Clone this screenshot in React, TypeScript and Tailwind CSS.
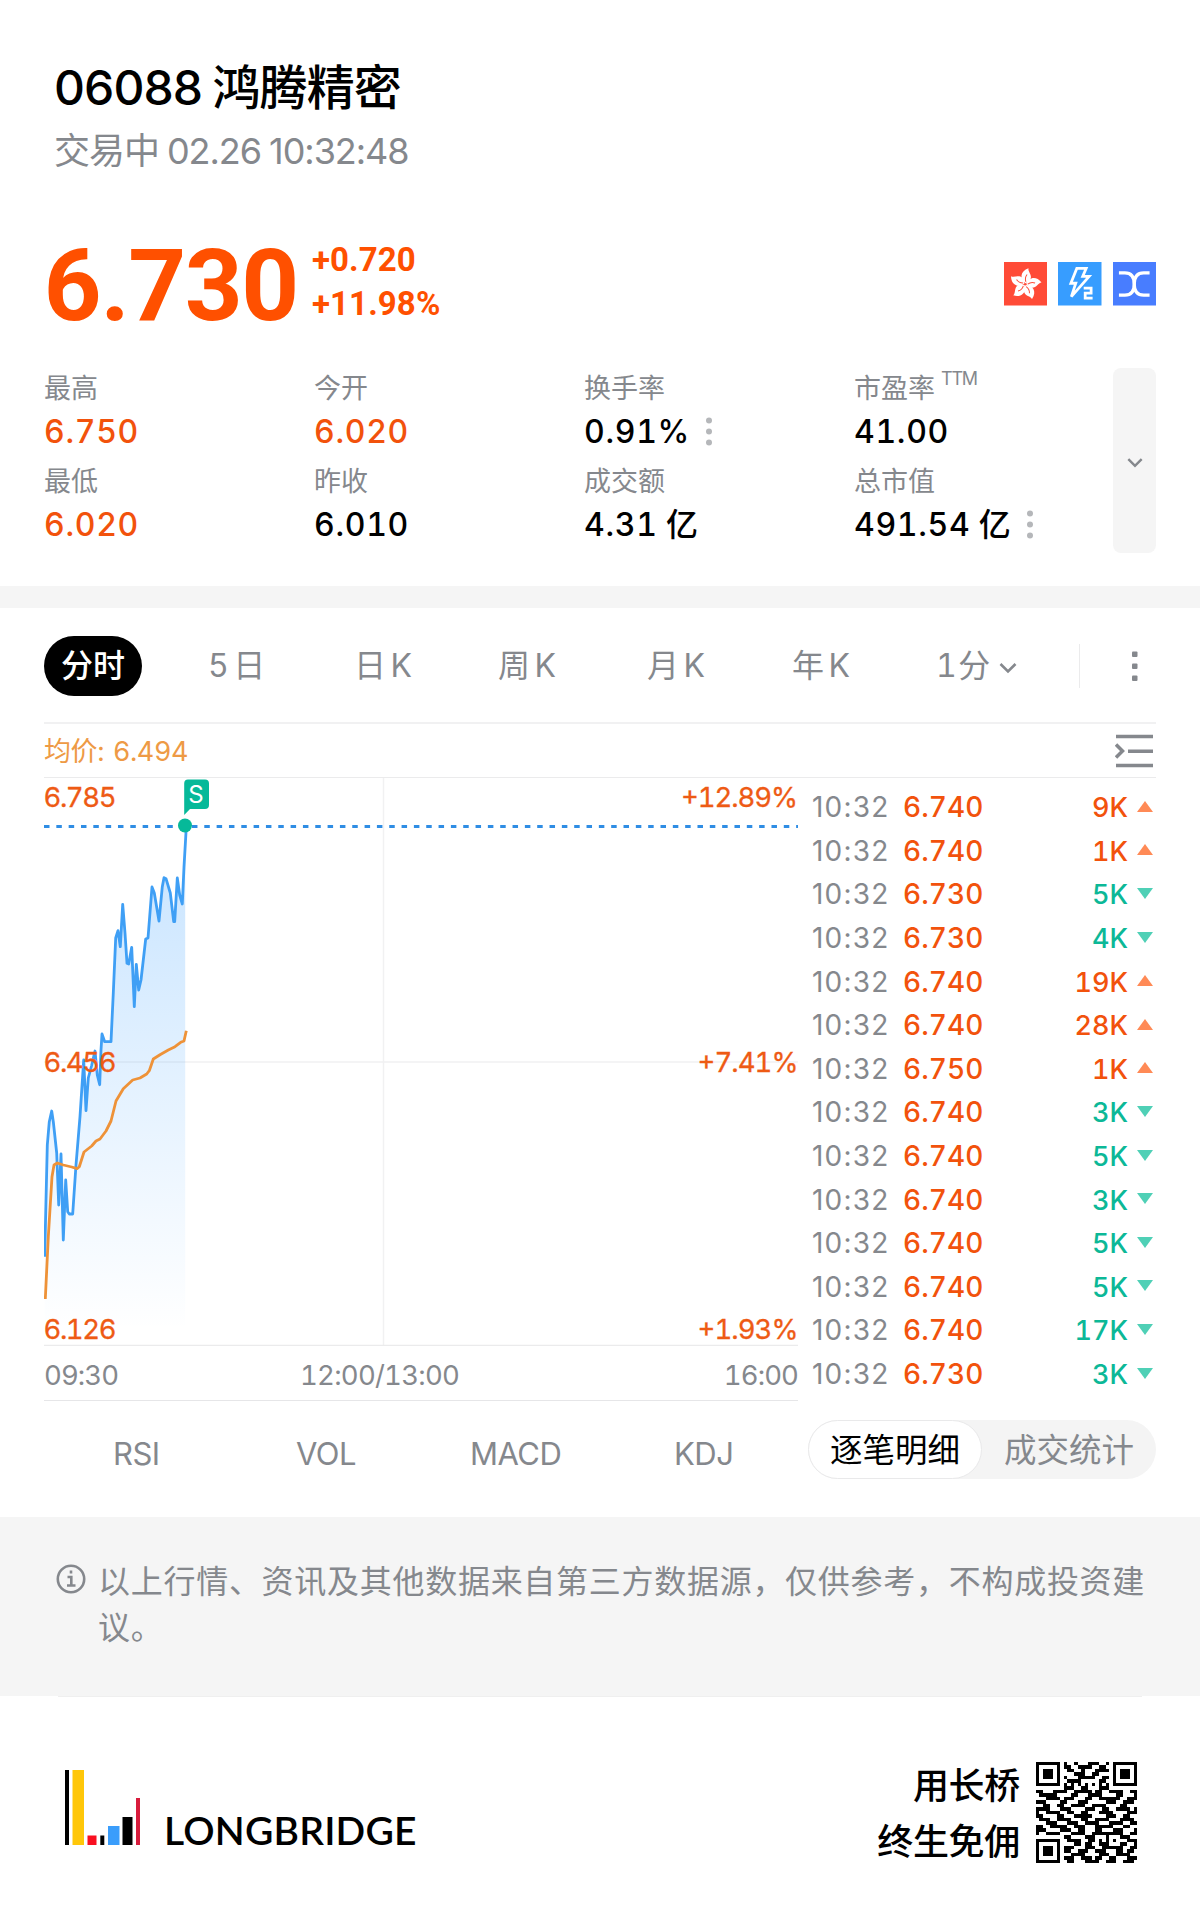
import React from 'react';

const stats = [
  [
    { label: '最高', value: '6.750', color: 'text-[#f2520c]' },
    { label: '最低', value: '6.020', color: 'text-[#f2520c]' },
  ],
  [
    { label: '今开', value: '6.020', color: 'text-[#f2520c]' },
    { label: '昨收', value: '6.010', color: 'text-black' },
  ],
  [
    { label: '换手率', value: '0.91%', color: 'text-black', more: true },
    { label: '成交额', value: '4.31 亿', color: 'text-black' },
  ],
  [
    { label: '市盈率', sup: 'TTM', value: '41.00', color: 'text-black' },
    { label: '总市值', value: '491.54 亿', color: 'text-black', more: true },
  ],
];

const trades = [
  { price: '6.740', qty: '9K', up: true },
  { price: '6.740', qty: '1K', up: true },
  { price: '6.730', qty: '5K', up: false },
  { price: '6.730', qty: '4K', up: false },
  { price: '6.740', qty: '19K', up: true },
  { price: '6.740', qty: '28K', up: true },
  { price: '6.750', qty: '1K', up: true },
  { price: '6.740', qty: '3K', up: false },
  { price: '6.740', qty: '5K', up: false },
  { price: '6.740', qty: '3K', up: false },
  { price: '6.740', qty: '5K', up: false },
  { price: '6.740', qty: '5K', up: false },
  { price: '6.740', qty: '17K', up: false },
  { price: '6.730', qty: '3K', up: false },
];

const pricePoints =
  '44.7,1256.7 47.3,1145 49.3,1121.7 51.7,1111 53.3,1121.7 56.7,1153 58.7,1205 61,1154 63.3,1240 65.7,1180 67.7,1211.7 69.3,1214 72.7,1214 76,1165 80,1116.7 83.7,1060 86,1110.7 88.3,1078 91.5,1066 95,1051 97.3,1075 99.7,1084.7 101,1050 102,1034 104.7,1041.7 111,1041.7 113.3,993 115.7,938 118,930.7 120.3,946.7 122.7,904.3 125,933 127,963.3 128.7,964 131.7,947.3 134.3,1006.7 136.3,964.3 138.7,990 141,980 143.3,960 145.7,939 148,938 152,887 154.3,893 159,921 162.3,886.7 164,877.7 166,878.7 170.3,893 173.7,921.7 174.7,921.7 177.3,878 179.7,895 182.3,904 184,867 186.3,827';

const averagePoints =
  '45.3,1299 48.3,1236.7 52,1176.7 54,1165 57.3,1163 63.3,1165 71.7,1167 77,1168.7 79.3,1166.7 84,1152 91.7,1146 96,1141 100,1139 106,1131 111,1121 116,1101 123.3,1088.7 132.7,1080 140,1078 146.7,1074 149.3,1070.7 153.3,1059 160,1054.7 168.3,1050 175,1046.7 180.7,1042.3 184,1041 186.3,1030.7';

// One string per row of modules
const qrRows = [
  '11111110100100011100101111111',
  '10000010110011110011001000001',
  '10111010011001000111101011101',
  '10111010000111001100001011101',
  '10111010100011111001101011101',
  '10000010011110000011001000001',
  '11111110101010101010101111111',
  '00000000111001100011100000000',
  '11000111100111110110011110011',
  '01111100001100011110000110001',
  '00011110111000110011111100111',
  '11100001100011100000111001110',
  '00110011001111001111000011000',
  '11110001110000111001100111101',
  '10011110011001100011110000111',
  '11000011000111110000111001100',
  '01110011110001100111100011110',
  '00011100011100111100011110011',
  '11001111100111000111110001100',
  '11100001110011000110001110001',
  '10011110001111001111111110011',
  '00000000110000111000100011100',
  '11111110011110011010101000111',
  '10000010000110110011100011001',
  '10111010111000111001111110011',
  '10111010110011100111000110110',
  '10111010001111000011100111100',
  '10000010111001110110011000111',
  '11111110011000111100111001110',
];

const Dots = () => (
  <svg className="ml-[16px] h-[34px] w-[6px]" viewBox="0 0 6 34" fill="#b5b7ba">
    <circle cx="3" cy="5.5" r="3" />
    <circle cx="3" cy="16.5" r="3" />
    <circle cx="3" cy="27.5" r="3" />
  </svg>
);

const Badges = () => (
  <div className="flex gap-[11px]">
    <svg className="size-[43.5px]" viewBox="0 0 44 44">
      <rect width="44" height="44" fill="#ff4b37" />
      {[8, 80, 152, 224, 296].map((angle) => (
        <g key={angle} transform={`rotate(${angle} 21.5 22.5)`}>
          <path d="M21.5 21.5C15 18 14.500 10 22.500 6C22 9.500 27.500 12 26 17C25.200 19.500 23 20.500 21.500 21.500Z" fill="#fff" />
          <path d="M21.800 20C20.500 17.500 20.500 15 22 12.500" fill="none" stroke="#ff4b37" strokeWidth="1" />
        </g>
      ))}
    </svg>
    <svg className="size-[43.5px]" viewBox="0 0 44 44" fill="none" stroke="#fff">
      <rect width="44" height="44" fill="#379dff" stroke="none" />
      <path d="M19 6.5H28.5L25 14.5H31.5L13.5 35L18 21.5H13L19 6.5Z" strokeWidth="2.8" />
      <path d="M26 26.5H33.5V31.5H27.5V36.5H35" strokeWidth="2.8" />
    </svg>
    <svg className="size-[43.5px]" viewBox="0 0 44 44" fill="none" stroke="#fff" strokeWidth="3.2">
      <rect width="44" height="44" fill="#487dff" stroke="none" />
      <path d="M6 11H12C18 11 21.5 15 21.5 22.5S18 33.5 12 33.5H6" />
      <path d="M37 11H31C25 11 21.5 15 21.5 22.5S25 33.5 31 33.5H37" />
    </svg>
  </div>
);

const Chart = () => (
  <svg className="block h-[568px] w-[754px]" viewBox="44 778 754 568">
    <defs>
      <linearGradient id="area" gradientUnits="userSpaceOnUse" x1="0" y1="827" x2="0" y2="1330">
        <stop offset="0" stopColor="#379dff" stopOpacity="0.28" />
        <stop offset="1" stopColor="#379dff" stopOpacity="0" />
      </linearGradient>
    </defs>
    <path d="M383.5 778V1346M44 1062H798" stroke="#f1f1f2" strokeWidth="1.5" />
    <path d="M44 1345.5H798" stroke="#ebebec" strokeWidth="1.5" />
    <polygon points={`44.7,1330 ${pricePoints} 185.2,827 185.2,1330`} fill="url(#area)" />
    <path d="M44 826.5H798" stroke="#2f8de4" strokeWidth="3" strokeDasharray="5.5 6.83" />
    <polyline points={pricePoints} fill="none" stroke="#3f9ff5" strokeWidth="2.8" strokeLinejoin="round" />
    <polyline points={averagePoints} fill="none" stroke="#ee9238" strokeWidth="2.8" strokeLinejoin="round" />
    <g className="tabular-nums" fill="#ee5a14" fontFamily="Inter" fontSize="27.5" stroke="#ee5a14" strokeWidth="0.3">
      <text x="43.5" y="807" textLength="73">6.785</text>
      <text x="43.5" y="1072" textLength="73">6.456</text>
      <text x="43.5" y="1339" textLength="73">6.126</text>
      <text x="681" y="807" textLength="117">+12.89%</text>
      <text x="697.5" y="1072" textLength="101">+7.41%</text>
      <text x="697.5" y="1339" textLength="101">+1.93%</text>
    </g>
    <circle cx="185" cy="825.5" r="7" fill="#06b999" />
    <path d="M188 779.5H205Q209 779.5 209 783.5V805Q209 809 205 809H190L184.2 815V783.5Q184.2 779.5 188 779.5Z" fill="#06b999" />
    <text x="196" y="803" textAnchor="middle" fill="#fff" fontFamily="Inter" fontSize="24">S</text>
  </svg>
);

const QrCode = () => (
  <svg className="size-[101px]" viewBox="0 0 29 29" shapeRendering="crispEdges">
    {qrRows.map((row, y) =>
      row.split('').map((cell, x) => (cell === '1' ? <rect key={`${x}-${y}`} x={x} y={y} width="1" height="1" /> : null))
    )}
  </svg>
);

const App = () => {
  return (
    <div className="h-[1930px] w-[1200px] overflow-hidden bg-white font-['Inter','Noto_Sans_CJK_SC',sans-serif] tabular-nums text-[#85888d]">
      {/* Header */}
      <header className="h-[586px] px-11 pt-[58px]">
        <h1 className="pl-[10px] text-[48px] font-medium leading-[60px] tracking-[-0.9px] text-black proportional-nums [word-spacing:-1.5px]">06088 鸿腾精密</h1>
        <p className="pl-[10px] text-[36px] leading-[66px] tracking-[-1.05px] proportional-nums [word-spacing:-1px]">交易中 02.26 10:32:48</p>
        <div className="mt-[48px] flex h-[104px] items-center font-[Roboto] font-bold text-[#ff5000]">
          <span className="w-[268px] pt-[4px] text-[101px] leading-[104px] tracking-[-1.5px]">6.730</span>
          <div className="pb-[4px] text-[33px] leading-[44px] tracking-[0.1px]">
            <p>+0.720</p>
            <p>+11.98%</p>
          </div>
          <div className="ml-auto">
            <Badges />
          </div>
        </div>
        <div className="mt-[32px] flex h-[185px]">
          {stats.map((column, i) => (
            <div key={i} className="w-[270px] shrink-0 pt-[2px] last-of-type:w-[259px]">
              {column.map((item) => (
                <div key={item.label} className="h-[93px]">
                  <p className="flex h-[38px] items-center text-[27px] leading-[38px]">
                    {item.label}
                    {item.sup && <span className="mb-5 ml-[6px] text-[18px] tracking-[-1.2px]">{item.sup}</span>}
                  </p>
                  <p className={`flex h-[47px] items-center text-[32px] font-medium leading-[47px] tracking-[0.7px] [word-spacing:-1px] ${item.color}`}>
                    {item.value}
                    {item.more && <Dots />}
                  </p>
                </div>
              ))}
            </div>
          ))}
          <button className="flex h-[185px] w-[43px] shrink-0 items-center justify-center rounded-lg bg-[#f5f5f5] pt-1">
            <svg className="h-[10px] w-[16px]" viewBox="0 0 14 9" fill="none" stroke="#85888d" strokeWidth="2.2">
              <path d="M1 1L7 7L13 1" />
            </svg>
          </button>
        </div>
      </header>
      <div className="h-[22px] bg-[#f5f5f5]" />

      {/* Period tabs */}
      <nav className="mx-11 flex h-[116px] items-center border-b-2 border-[#f1f1f2] pt-px text-[32px] [word-spacing:-4px]">
        <span className="flex h-[60px] w-[98px] items-center justify-center rounded-[30px] bg-black font-medium text-white">分时</span>
        <span className="ml-[66px] w-[146px]">5 日</span>
        <span className="w-[144px]">日 K</span>
        <span className="w-[149px]">周 K</span>
        <span className="w-[145px]">月 K</span>
        <span className="w-[144px]">年 K</span>
        <span className="[word-spacing:-7px]">1 分</span>
        <svg className="ml-[9px] mt-1 h-[12px] w-[18px]" viewBox="0 0 18 12" fill="none" stroke="#85888d" strokeWidth="2.6">
          <path d="M1.5 2L9 9.5L16.5 2" />
        </svg>
        <span className="ml-auto h-11 w-px bg-[#ebebec]" />
        <svg className="ml-[52px] mr-[18px] h-[32px] w-[6px]" viewBox="0 0 6 32" fill="#85888d">
          <rect y="1.5" width="5.5" height="5.5" rx="1" />
          <rect y="13.5" width="5.5" height="5.5" rx="1" />
          <rect y="25.5" width="5.5" height="5.5" rx="1" />
        </svg>
      </nav>

      <div className="mx-11 flex h-[54px] items-center justify-between border-b border-[#ebebec] text-[27px] text-[#ee9a45]">
        <span className="pt-[3px] tracking-[-0.4px] [word-spacing:2px]">均价: 6.494</span>
        <svg className="mr-[3px] h-[34px] w-[38px]" viewBox="0 0 38 34" fill="none" stroke="#85888d" strokeWidth="3.5">
          <path d="M1 2.5H38M13 17.2H38M1 31.5H38M1 10.5L7.5 17L1 23.5" />
        </svg>
      </div>

      <main className="mx-11 flex h-[739px]">
        <section className="w-[754px]">
          <Chart />
          <div className="flex h-[55px] items-center border-b border-[#e6e6e8] pt-[5px] text-[27.5px] tracking-[-0.9px]">
            <span className="w-[256px]">09:30</span>
            <span className="tracking-[-0.75px]">12:00/13:00</span>
            <span className="ml-auto">16:00</span>
          </div>
          <div className="flex h-[106px] items-center pl-[69px] text-[31px] tracking-[-0.5px]">
            <span className="w-[183px]">RSI</span>
            <span className="w-[174px]">VOL</span>
            <span className="w-[204px]">MACD</span>
            <span>KDJ</span>
          </div>
        </section>
        <section className="flex-1">
          <ul className="pl-[14px] pt-[8px] text-[28px]">
            {trades.map((trade, i) => (
              <li key={i} className="flex h-[43.6px] items-center leading-[43px]">
                <span className="w-[91px] tracking-[1.2px] proportional-nums">10:32</span>
                <span className="font-medium tracking-[0.1px] text-[#f2520c]">{trade.price}</span>
                <span className={trade.up ? 'ml-auto text-[27px] font-medium text-[#f2520c]' : 'ml-auto text-[27px] font-medium text-[#0cb897]'}>
                  {trade.qty}
                </span>
                <svg className="mb-[3px] ml-[9px] mr-[3px] h-[11px] w-[16px]" viewBox="0 0 16 11">
                  {trade.up ? <path d="M0 11L8 0L16 11Z" fill="#ff8a56" /> : <path d="M0 0H16L8 11Z" fill="#4fd0b6" />}
                </svg>
              </li>
            ))}
          </ul>
          <div className="ml-[10px] mt-[24px] flex h-[59px] rounded-full bg-[#f4f4f4] text-[32.5px]">
            <span className="flex w-[174px] items-center justify-center rounded-full border border-[#e9e9ea] bg-white pt-[4px] text-black">逐笔明细</span>
            <span className="flex flex-1 items-center justify-center pt-[4px]">成交统计</span>
          </div>
        </section>
      </main>

      {/* Disclaimer */}
      <div className="flex h-[179px] bg-[#f5f5f5] pl-14 pt-[42px]">
        <svg className="mt-[5px] size-[30px] shrink-0" viewBox="0 0 30 30" fill="none" stroke="#85888d" strokeWidth="2.6">
          <circle cx="15" cy="15" r="13.2" />
          <path d="M15 6.5V9.5M11.5 13H15.3V21M11 21.5H19.5" />
        </svg>
        <p className="ml-[12px] w-[1056px] text-[32px] leading-[46px] tracking-[0.72px]">
          以上行情、资讯及其他数据来自第三方数据源，仅供参考，不构成投资建议。
        </p>
      </div>

      <footer className="mx-[58px] flex h-[234px] justify-between border-t border-[#efefef]">
        <div className="flex h-[148px] items-end pl-[7px]">
          <svg className="h-[75px] w-[76px]" viewBox="0 0 76 75">
            <rect width="4" height="75" />
            <rect x="7.5" width="11.5" height="75" fill="#ffc709" />
            <rect x="22.5" y="65.5" width="9" height="9.5" fill="#f90f20" />
            <rect x="35.3" y="65.5" width="4" height="9.5" />
            <rect x="43" y="56" width="11.5" height="19" fill="#3a9dfb" />
            <rect x="57.5" y="47" width="10" height="28" />
            <rect x="71" y="28" width="4" height="47" fill="#d81c3c" />
          </svg>
          <span className="-mb-[9px] ml-[23px] font-[Lato] text-[39px] font-semibold leading-[48px] tracking-[0.2px] text-black">LONGBRIDGE</span>
        </div>
        <div className="flex pr-[5px] pt-[61px]">
          <p className="mr-[16px] text-right text-[36px] font-medium leading-[56px] tracking-[-0.3px] text-black">
            用长桥
            <br />
            终生免佣
          </p>
          <div className="pt-[4px]">
            <QrCode />
          </div>
        </div>
      </footer>
    </div>
  );
};

export default App;
